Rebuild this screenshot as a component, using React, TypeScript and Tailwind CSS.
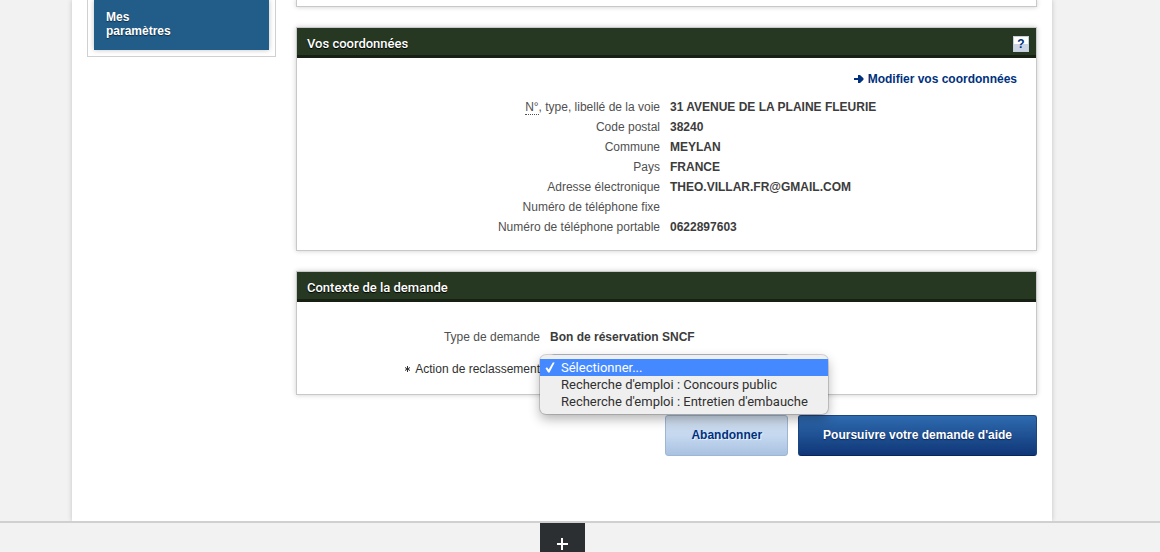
import { useState } from "react";
import type { ReactNode } from "react";

const coordinates: { label: ReactNode; value: string }[] = [
  {
    label: (
      <>
        <abbr
          title="Numéro"
          className="border-b border-dotted border-[#505050] no-underline"
        >
          N°
        </abbr>
        , type, libellé de la voie
      </>
    ),
    value: "31 AVENUE DE LA PLAINE FLEURIE",
  },
  { label: "Code postal", value: "38240" },
  { label: "Commune", value: "MEYLAN" },
  { label: "Pays", value: "FRANCE" },
  { label: "Adresse électronique", value: "THEO.VILLAR.FR@GMAIL.COM" },
  { label: "Numéro de téléphone fixe", value: "" },
  { label: "Numéro de téléphone portable", value: "0622897603" },
];

const actions = [
  "Sélectionner...",
  "Recherche d'emploi : Concours public",
  "Recherche d'emploi : Entretien d'embauche",
];

function Panel({
  title,
  aside,
  children,
}: {
  title: string;
  aside?: ReactNode;
  children: ReactNode;
}) {
  return (
    <section className="border border-[#c8c8c8] bg-white shadow-[0_0_5px_rgba(0,0,0,0.2)]">
      <header className="flex h-[30px] items-center justify-between border-b-3 border-[#172113] bg-[#273822] pr-[7px] pl-2.5 pt-1">
        <h2 className="font-['Roboto',sans-serif] text-[13px] leading-4 font-medium text-white [text-shadow:0_1px_1px_#000]">
          {title}
        </h2>
        {aside}
      </header>
      {children}
    </section>
  );
}

function ActionSelect() {
  const [selected, setSelected] = useState(0);
  return (
    <div className="relative w-60">
      <select
        id="action"
        value={selected}
        onChange={(e) => setSelected(Number(e.target.value))}
        className="block h-[30px] w-full rounded-sm border border-[#c9d5ea] bg-white px-2"
      >
        {actions.map((a, i) => (
          <option key={a} value={i}>
            {a}
          </option>
        ))}
      </select>
      <ul
        role="listbox"
        aria-label="Action de reclassement"
        className="absolute top-px -left-2.5 z-10 w-72 rounded-md bg-[#efefef] py-1 font-['Roboto',sans-serif] text-[13px] leading-[17px] text-[#303030] shadow-[0_0_0_1px_rgba(0,0,0,0.15),0_5px_12px_rgba(0,0,0,0.3)]"
      >
        {actions.map((a, i) => (
          <li
            key={a}
            role="option"
            aria-selected={i === selected}
            onClick={() => setSelected(i)}
            className={
              i === selected
                ? "flex items-center bg-[#4489ff] text-white"
                : "flex items-center"
            }
          >
            <span className="flex w-[21px] shrink-0 pl-[5px]">
              {i === selected && (
                <svg width="10" height="11" viewBox="0 0 10 11" aria-hidden="true">
                  <path
                    d="M0.5 6.2 L2 5.2 L3.7 7.4 L7.8 0.6 L9.7 0.6 L4.5 10.4 L3.1 10.4 Z"
                    fill="currentColor"
                  />
                </svg>
              )}
            </span>
            <span className="whitespace-nowrap">{a}</span>
          </li>
        ))}
      </ul>
    </div>
  );
}

export default function App() {
  return (
    <div className="flex min-h-screen flex-col bg-[#f2f2f2] font-['Liberation_Sans',Arial,sans-serif] text-[12px] leading-5 text-[#505050]">
      <div className="overflow-hidden border-b-2 border-[#d0d0d0] pr-9">
        <div className="mx-auto flex w-full max-w-[980px] items-start gap-5 bg-white pr-[15px] pb-[65px] pl-[15px] shadow-[0_0_5px_rgba(0,0,0,0.2)]">
          <nav className="w-[189px] shrink-0 border border-t-0 border-[#d0d0d0] p-1.5 pt-0">
            <a
              href="#parametres"
              className="block bg-[#225c88] px-3 pt-2.5 pb-3 text-[12px] leading-[14px] font-bold text-white shadow-[0_0_5px_rgba(0,0,0,0.25)] [text-shadow:0_1px_1px_#102c44]"
            >
              Mes
              <br />
              paramètres
            </a>
          </nav>

          <main className="flex min-w-0 flex-1 flex-col gap-5">
            <div className="h-[7px] border border-t-0 border-[#c8c8c8] shadow-[0_0_5px_rgba(0,0,0,0.2)]" />

            <Panel
              title="Vos coordonnées"
              aside={
                <button
                  type="button"
                  aria-label="Aide"
                  className="flex size-4 items-center justify-center border border-[#c5cfdd] bg-linear-to-b from-white from-50% to-[#cbd5e5] to-50% text-[12px] leading-3 font-bold text-[#00317e]"
                >
                  ?
                </button>
              }
            >
              <div className="flex justify-end pt-[11px] pr-[19px]">
                <a
                  href="#modifier"
                  className="flex items-center gap-1 font-bold text-[#00317e]"
                >
                  <svg width="10" height="8" viewBox="0 0 10 8" aria-hidden="true">
                    <path
                      d="M0 3H4V0H6L9.5 3.2V4.8L6 8H4V5H0Z"
                      fill="currentColor"
                    />
                  </svg>
                  Modifier vos coordonnées
                </a>
              </div>
              <dl className="pt-2 pb-[13px]">
                {coordinates.map((row, i) => (
                  <div key={i} className="flex min-h-5 gap-2.5">
                    <dt className="w-[363px] shrink-0 text-right">{row.label}</dt>
                    <dd className="font-bold text-[#3c3c3c]">{row.value}</dd>
                  </div>
                ))}
              </dl>
            </Panel>

            <Panel title="Contexte de la demande">
              <div className="flex flex-col gap-[7px] pt-[25px] pb-2.5">
                <dl className="flex gap-2.5">
                  <dt className="w-[243px] shrink-0 text-right">Type de demande</dt>
                  <dd className="font-bold text-[#3c3c3c]">
                    Bon de réservation SNCF
                  </dd>
                </dl>
                <div className="flex items-center gap-2.5">
                  <label
                    htmlFor="action"
                    className="flex w-[243px] shrink-0 items-center justify-end gap-[5px] text-[#303030]"
                  >
                    <svg width="5" height="6" viewBox="0 0 5 6" aria-hidden="true">
                      <path
                        d="M2.5 0V6M0 1.5L5 4.5M5 1.5L0 4.5"
                        stroke="currentColor"
                        fill="none"
                      />
                    </svg>
                    Action de reclassement
                  </label>
                  <ActionSelect />
                </div>
              </div>
            </Panel>

            <div className="flex justify-end gap-2.5 font-bold">
              <button
                type="button"
                className="h-[41px] rounded-[3px] border border-[#9fb6d3] bg-linear-to-b from-[#cfdcec] via-[#c5d8ef] to-[#a9c2e1] px-[25px] pb-0.5 text-[#00317e] [text-shadow:1px_1px_0_#e6eefa]"
              >
                Abandonner
              </button>
              <button
                type="button"
                className="h-[41px] rounded-[3px] border border-[#1c4680] border-b-[#0a2558] bg-linear-to-b from-[#2f6bb0] to-[#103777] px-6 pb-0.5 text-white [text-shadow:0_1px_1px_#0a2558]"
              >
                Poursuivre votre demande d'aide
              </button>
            </div>
          </main>
        </div>
      </div>

      <footer className="flex justify-center pr-[35px]">
        <button
          type="button"
          aria-label="Afficher le pied de page"
          className="flex h-[29px] w-[45px] justify-center bg-[#2b2f32] pt-[15px] text-white"
        >
          <svg width="11" height="12" viewBox="0 0 11 12" aria-hidden="true">
            <path d="M5 0V12M0 6H11" stroke="currentColor" strokeWidth="2" />
          </svg>
        </button>
      </footer>
    </div>
  );
}
